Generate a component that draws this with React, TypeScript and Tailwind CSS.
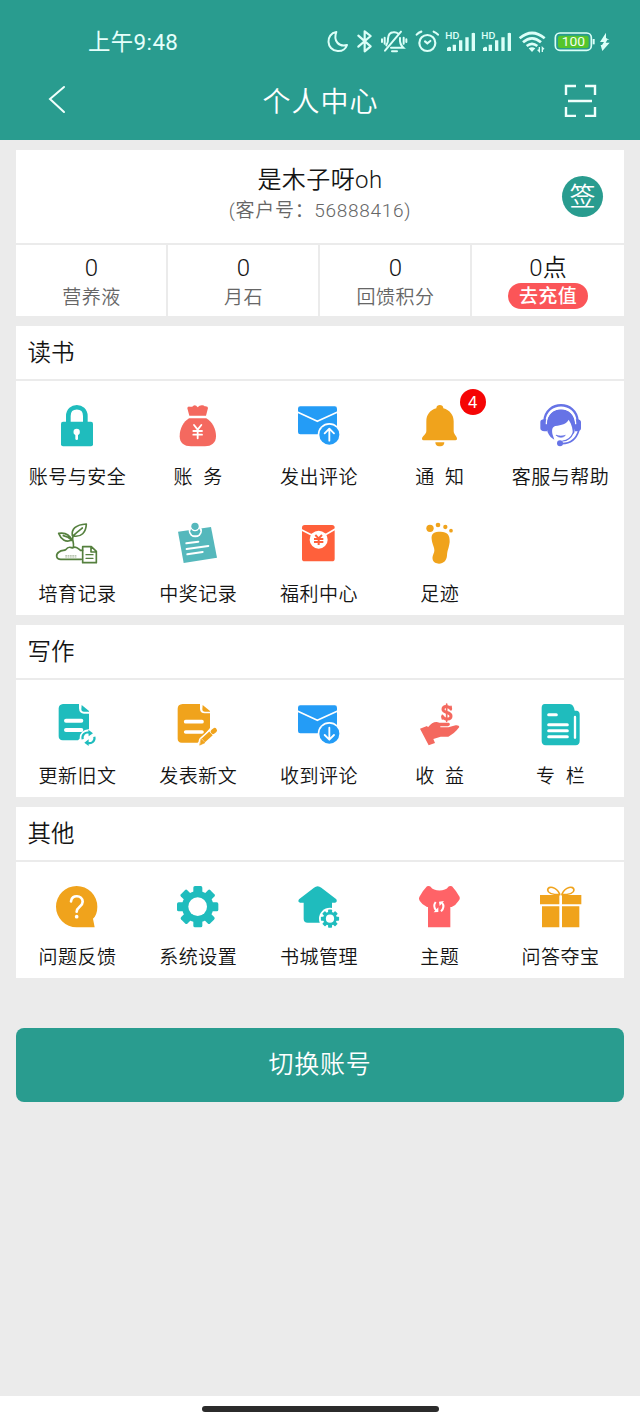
import type { ReactNode } from "react";

const TEAL = "#1fbcbd";
const ORANGE = "#f0a31c";
const CORAL = "#f4695f";
const BLUE = "#249cf6";

function Icon({ children }: { children: ReactNode }) {
  return (
    <svg viewBox="0 0 126 126" className="block size-[42px] shrink-0 overflow-visible" fill="none" strokeLinecap="round" strokeLinejoin="round">
      {children}
    </svg>
  );
}

const Lock = () => (
  <Icon>
    <path d="M37 56V33C37 -2 88 -2 88 33V56" stroke={TEAL} strokeWidth="14" />
    <rect x="15" y="50" width="96" height="74" rx="6" fill={TEAL} />
    <circle cx="62" cy="81" r="9.5" fill="#fff" />
    <path d="M62 84V101" stroke="#fff" strokeWidth="8" />
  </Icon>
);

const MoneyBag = () => (
  <Icon>
    <path d="M37 32L31 10Q31 4 38 5Q45 7 49 2Q56 -2 62 7Q67 1 74 1Q80 0 83 4Q93 3 93 9L87 32Z" fill={CORAL} />
    <path d="M36 40H88C106 50 117 72 117 94C117 114 103 124 84 124H42C21 124 8 114 8 94C8 70 20 50 36 40Z" fill={CORAL} />
    <path d="M51 60L62 74L73 60M62 74V100M49 78H75M49 89H75" stroke="#fff" strokeWidth="5.5" />
  </Icon>
);

function Mail({ down = false }: { down?: boolean }) {
  return (
    <Icon>
      <rect y="4" width="117" height="84" rx="7" fill={BLUE} />
      <path d="M-2 21L58 49L119 21" stroke="#fff" strokeWidth="5" />
      <circle cx="94" cy="89" r="35" fill="#fff" />
      <circle cx="94" cy="89" r="30" fill={BLUE} />
      <path d={down ? "M94 71V105M80 93L94 107L108 93" : "M94 107V73M80 85L94 71L108 85"} stroke="#fff" strokeWidth="5.5" />
    </Icon>
  );
}

const Bell = () => (
  <Icon>
    <path d="M52 10C52 -3 73 -3 73 10C93 16 104 30 104 49V78C104 88 114 94 114 101Q114 106 109 106H14Q9 106 9 101C9 94 22 88 22 78V49C22 30 32 16 52 10Z" fill={ORANGE} />
    <path d="M49 112H76C76 120 71 124 65 124H60C54 124 49 120 49 112Z" fill={ORANGE} />
  </Icon>
);

const Support = () => (
  <Icon>
    <path d="M13 48C18 -15 108 -15 113 48" stroke="#6673e6" strokeWidth="7" />
    <path d="M23 82C12 43 30 13 63 13C96 13 113 44 103 83L98 87C99 73 96 60 86 44C79 57 65 60 46 63C36 65 34 78 39 92L43 104C34 100 27 92 23 82Z" fill="#6673e6" />
    <path d="M13 43H21V79H13Q1 78 1 70V51Q1 43 13 43ZM105 43H112Q123 44 123 52V70Q123 78 112 79H105Z" fill="#6673e6" />
    <path d="M19 56C18 -4 108 -4 107 56" stroke="#fff" strokeWidth="4" />
    <path d="M116 77C109 101 90 115 66 116" stroke="#6673e6" strokeWidth="5" />
    <path d="M100 83C92 101 82 107 68 108" stroke="#6673e6" strokeWidth="3.5" />
    <circle cx="60" cy="115" r="9" fill="#6673e6" />
    <path d="M49 91C56 99 69 99 76 91C67 94 58 94 49 91Z" stroke="#6673e6" strokeWidth="2" fill="#6673e6" />
  </Icon>
);

const Sprout = () => (
  <Icon>
    <g stroke="#55803e" strokeWidth="5">
      <path d="M49 38C46 19 58 5 91 3C90 29 76 43 52 39M52 38C62 28 70 22 79 15" />
      <path d="M48 52C40 33 25 28 8 31C15 49 29 59 46 52M22 38C33 40 41 45 48 52M51 40C47 51 55 59 52 72" />
      <path d="M76 109H14C0 109 -2 94 9 87C18 80 25 84 29 80C38 68 43 73 50 75C59 66 67 77 73 82H80" />
      <path d="M80 71H106L121 85V119H80ZM105 72V87H120" />
      <path d="M90 95H111M90 106H111" strokeWidth="4" />
    </g>
    <path d="M29 98H60M29 102H60" stroke="#9caf91" strokeWidth="2.5" strokeDasharray="3 4" />
  </Icon>
);

const PinnedNote = () => (
  <Icon>
    <path d="M3 26L102 12L120 104L20 120Z" fill="#55b8bc" />
    <ellipse cx="55" cy="24" rx="20" ry="19" fill="#fff" />
    <ellipse cx="55" cy="25" rx="15" ry="12" fill="#55b8bc" />
    <circle cx="54" cy="12" r="13" fill="#fff" />
    <circle cx="54" cy="10" r="11" fill="#55b8bc" />
    <path d="M44 17C47 25 61 25 65 17" stroke="#fff" strokeWidth="3" />
    <path d="M28 61L64 56M29 78L94 69M31 94L77 87" stroke="#fff" strokeWidth="6" />
  </Icon>
);

const RedPacket = () => (
  <Icon>
    <rect x="12" y="6" width="98" height="109" rx="8" fill="#ff603b" />
    <path d="M10 20L47 39M112 18L77 38" stroke="#fff" strokeWidth="5" />
    <circle cx="62" cy="50" r="27" fill="#fff" />
    <path d="M52 36L62 46L72 36M62 46V66M48 48H76M48 57H76" stroke="#ff603b" strokeWidth="6" strokeLinecap="butt" />
  </Icon>
);

const Footprint = () => (
  <Icon>
    <ellipse cx="33" cy="16" rx="11" ry="11" fill={ORANGE} />
    <circle cx="57" cy="6" r="7" fill={ORANGE} />
    <circle cx="79" cy="12" r="6.5" fill={ORANGE} />
    <circle cx="96" cy="23" r="5.5" fill={ORANGE} />
    <path d="M38 48C36 31 46 26 65 26C85 26 93 36 92 57C90 75 85 81 84 97C83 113 74 122 60 122C41 122 37 107 43 94C52 77 39 67 38 48Z" fill={ORANGE} />
  </Icon>
);

function Doc({ color, edit = false }: { color: string; edit?: boolean }) {
  return (
    <Icon>
      {edit ? (
        <>
          <path d="M17 0H69V15Q70 28 83 28H99V72L62 116H14Q2 115 2 104V14Q2 1 17 0Z" fill={color} />
          <path d="M77 3L99 21V23H84Q76 23 76 15Z" fill={color} />
          <path d="M26 53H75M26 84H75" stroke="#fff" strokeWidth="11" />
          <path d="M78 111L112 81" stroke="#fff" strokeWidth="26" />
          <path d="M79 109L102 88" stroke={color} strokeWidth="15" strokeLinecap="butt" />
          <path d="M73 105L84 116L69 123Z" fill={color} stroke={color} strokeWidth="2" />
          <path d="M108 83L113 79" stroke={color} strokeWidth="14" />
        </>
      ) : (
        <>
          <path d="M21 0H69V13Q70 29 84 29H99V76L66 109H20Q8 108 8 97V13Q9 1 21 0Z" fill={color} />
          <path d="M77 3L99 21V23H84Q76 23 76 15Z" fill={color} />
          <path d="M30 50H76M30 78H76" stroke="#fff" strokeWidth="12" />
          <circle cx="97" cy="102" r="26" fill="#fff" />
          <path d="M80 106C77 93 87 83 99 86M115 98C118 110 108 120 96 117" stroke={color} strokeWidth="6.5" strokeLinecap="butt" />
          <path d="M97 77L111 88L98 97ZM98 106L85 116L98 126Z" fill={color} />
        </>
      )}
    </Icon>
  );
}

const Income = () => (
  <Icon>
    <path d="M3 74L24 66L27 70C38 56 49 51 61 56H89Q95 58 92 64L87 67H64V70H88L110 64Q121 63 121 69C111 84 98 92 88 98H65L43 105L48 117L29 124Z" fill={CORAL} />
    <path d="M95 14C89 5 72 5 72 16C72 29 96 22 96 36C96 48 77 48 71 38" stroke={CORAL} strokeWidth="9" />
    <path d="M83 0V52M96 7V17M70 34V45" stroke={CORAL} strokeWidth="5" />
  </Icon>
);

const Newspaper = () => (
  <Icon>
    <path d="M14 0H89Q101 1 104 20H111Q119 22 119 31V110Q119 123 107 124H17Q5 123 5 111V11Q5 1 14 0Z" fill={TEAL} />
    <path d="M26 32H49M26 62H82M26 80H82M26 98H82" stroke="#fff" strokeWidth="9" />
    <path d="M105 39V101" stroke="#fff" strokeWidth="7" />
  </Icon>
);

const Question = () => (
  <Icon>
    <path d="M62 0A62 62 0 0 1 124 62C124 79 119 91 111 98L116 124H62A62 62 0 0 1 62 0Z" fill={ORANGE} />
    <path d="M45 46C46 24 80 27 80 47C80 62 62 62 62 77" stroke="#fff" strokeWidth="8" />
    <circle cx="62" cy="92" r="5.5" fill="#fff" />
  </Icon>
);

function GearShape() {
  return (
    <>
      {[0, 45, 90, 135].map((angle) => (
        <rect key={angle} x="49" y="0" width="27" height="124" rx="5" fill={TEAL} transform={`rotate(${angle} 62 62)`} />
      ))}
      <circle cx="62" cy="62" r="47" fill={TEAL} />
      <circle cx="62" cy="62" r="28" fill="#fff" />
    </>
  );
}

const Gear = () => (
  <Icon>
    <GearShape />
  </Icon>
);

const HomeSettings = () => (
  <Icon>
    <path d="M3 40L48 5Q59 -4 70 5L115 40Q119 49 111 50H102V110H29Q17 110 17 99V50H6Q-2 48 3 40Z" fill={TEAL} />
    <circle cx="96" cy="98" r="33" fill="#fff" />
    <g transform="translate(68.7 70.7) scale(.44)">
      <GearShape />
    </g>
  </Icon>
);

const Shirt = () => (
  <Icon>
    <path d="M35 2C43 17 80 17 88 2Q92 -1 99 1Q112 15 122 33Q124 39 119 44Q111 57 98 63H94V124H27V63H24Q9 56 2 44Q-2 38 1 33Q12 13 24 1Q31 -1 35 2Z" fill="#ff6367" />
    <path d="M50 48C44 56 45 66 52 74M66 76C74 68 75 58 69 50" stroke="#fff" strokeWidth="6" strokeLinecap="butt" />
    <path d="M44 79L58 78V64ZM75 45L60 47L62 60Z" fill="#fff" />
  </Icon>
);

const Gift = () => (
  <Icon>
    <path d="M59 24C49 2 24 -2 23 12C24 25 44 26 59 26ZM66 24C76 2 101 -2 102 12C101 25 81 26 66 26Z" stroke={ORANGE} strokeWidth="5" />
    <path d="M0 27H58V55H0ZM66 27H124V55H66ZM6 61H58V124H6ZM66 61H118V124H66Z" fill={ORANGE} />
  </Icon>
);

type Item = { label: string; icon: ReactNode; badge?: number };

const sections: { title: string; items: Item[] }[] = [
  {
    title: "读书",
    items: [
      { label: "账号与安全", icon: <Lock /> },
      { label: "账  务", icon: <MoneyBag /> },
      { label: "发出评论", icon: <Mail /> },
      { label: "通  知", icon: <Bell />, badge: 4 },
      { label: "客服与帮助", icon: <Support /> },
      { label: "培育记录", icon: <Sprout /> },
      { label: "中奖记录", icon: <PinnedNote /> },
      { label: "福利中心", icon: <RedPacket /> },
      { label: "足迹", icon: <Footprint /> },
    ],
  },
  {
    title: "写作",
    items: [
      { label: "更新旧文", icon: <Doc color={TEAL} /> },
      { label: "发表新文", icon: <Doc color={ORANGE} edit /> },
      { label: "收到评论", icon: <Mail down /> },
      { label: "收  益", icon: <Income /> },
      { label: "专  栏", icon: <Newspaper /> },
    ],
  },
  {
    title: "其他",
    items: [
      { label: "问题反馈", icon: <Question /> },
      { label: "系统设置", icon: <Gear /> },
      { label: "书城管理", icon: <HomeSettings /> },
      { label: "主题", icon: <Shirt /> },
      { label: "问答夺宝", icon: <Gift /> },
    ],
  },
];

const stats = [
  { value: "0", label: "营养液" },
  { value: "0", label: "月石" },
  { value: "0", label: "回馈积分" },
];

function Signal() {
  return (
    <svg viewBox="0 0 108 150" className="h-[50px] w-9" fill="#dcfff8">
      <text x="10" y="56" fontSize="26" fontWeight="600" fontFamily="Inter, sans-serif" textLength="42" lengthAdjust="spacingAndGlyphs">HD</text>
      <path d="M15 84Q25 77 27 83V93H15ZM32 74H42V93H32ZM51 61H61V93H51ZM70 52H80V93H70ZM89 40Q94 36 99 40V93H89Z" />
    </svg>
  );
}

function StatusIcons() {
  return (
    <div className="flex h-[50px]">
      <svg viewBox="18 0 78 150" className="h-[50px] w-[26px]" fill="none" stroke="#dcfff8" strokeWidth="6" strokeLinejoin="round">
        <path d="M49 36C16 41 18 91 53 93C68 94 78 85 81 75C57 82 39 63 49 36Z" />
      </svg>
      <svg viewBox="96 0 72 150" className="h-[50px] w-6" fill="none" stroke="#dcfff8" strokeWidth="6.5" strokeLinejoin="round" strokeLinecap="round">
        <path d="M115 47L152 79L134 94V34L152 48L115 80" />
      </svg>
      <svg viewBox="168 0 108 150" className="h-[50px] w-9" fill="none" stroke="#dcfff8" strokeWidth="6" strokeLinecap="round">
        <path d="M243 35L195 92M199 76Q205 66 204 56Q205 38 220 37Q229 36 235 41M240 54Q238 72 250 83H213M216 94H231M194 53V71M186 58V66M251 53V71M259 58V66" />
      </svg>
      <svg viewBox="276 0 90 150" className="h-[50px] w-[30px]" fill="none" stroke="#dcfff8" strokeWidth="6.5" strokeLinecap="round">
        <circle cx="322" cy="69" r="24" />
        <path d="M290 44Q296 37 304 35M341 35Q349 38 354 44M315 64L322 70L331 63" />
      </svg>
      <Signal />
      <Signal />
      <svg viewBox="582 0 108 150" className="h-[50px] w-9" fill="none" stroke="#dcfff8" strokeWidth="8">
        <path d="M599 55Q636 23 674 55M609 67Q636 43 663 67M620 78Q636 65 652 78" />
        <path d="M626 85Q636 79 646 85L636 96Z" fill="#dcfff8" stroke="none" />
        <path d="M658 81V94L653 89M667 96V83L672 88" strokeWidth="4" />
      </svg>
      <svg viewBox="690 0 138 150" className="h-[50px] w-[46px]">
        <rect x="706" y="39" width="108" height="52" rx="14" fill="none" stroke="#dcfff8" strokeWidth="5" />
        <rect x="714" y="47" width="92" height="37" rx="7" fill="#55c52b" />
        <path d="M821 57V73" stroke="#dcfff8" strokeWidth="6" />
        <text x="760" y="79" fontSize="41" fontWeight="400" textAnchor="middle" fill="#f3ffef" fontFamily="Roboto, sans-serif" textLength="70" lengthAdjust="spacingAndGlyphs">100</text>
      </svg>
      <svg viewBox="828 0 48 150" className="h-[50px] w-4" fill="#dcfff8">
        <path d="M858 38L840 66H852L846 75H842L847 93L869 68H857L862 59H868L858 54Z" />
      </svg>
    </div>
  );
}

function Section({ title, items }: { title: string; items: Item[] }) {
  return (
    <section className="mb-[10px] bg-white pb-[7.5px]">
      <h2 className="flex h-[55px] items-center border-b-2 border-[#ebebeb] pt-[3px] pl-[11.5px] text-[23.5px] font-[350] text-[#141414]">{title}</h2>
      <div className="grid grid-cols-5 gap-y-[32.5px] pt-6 pr-[3px] pl-px">
        {items.map((item) => (
          <button key={item.label} type="button" className="flex h-[85px] flex-col items-center">
            <span className="relative block">
              {item.icon}
              {item.badge && (
                <span className="absolute -top-4 left-[41px] flex size-[26px] items-center justify-center rounded-full bg-[#f50505] font-['Inter'] text-[16px] font-normal text-white">
                  {item.badge}
                </span>
              )}
            </span>
            <span className="mt-[16.5px] text-[19px] leading-7 font-[350] tracking-[0.5px] whitespace-pre text-[#141414]">{item.label}</span>
          </button>
        ))}
      </div>
    </section>
  );
}

export default function App() {
  return (
    <div className="flex h-[1422px] w-[640px] flex-col bg-[#ebebeb] font-['Roboto','Noto_Sans_CJK_SC',sans-serif]">
      <header className="h-[140px] shrink-0 bg-[#299c8f] text-white">
        <div className="flex h-[70px] justify-between pt-5 pr-7 pl-[88px]">
          <time className="text-[22.4px] leading-[44px] font-normal tracking-[0.4px] text-[#e6fffb]">上午9:48</time>
          <StatusIcons />
        </div>
        <div className="flex h-[60px] items-center justify-between pr-[43px] pl-[48px]">
          <svg viewBox="0 0 34 34" className="size-[34px]" fill="none" stroke="#f0fffc" strokeWidth="2" strokeLinecap="round">
            <path d="M16 4L2 16L16 29" />
          </svg>
          <h1 className="-ml-[4px] pt-1.5 text-[28px] font-[350] tracking-[1px]">个人中心</h1>
          <svg viewBox="0 0 34 34" className="size-[34px]" fill="none" stroke="#f0fffc" strokeWidth="2.4">
            <path d="M3 12V3H13M22 3H32V12M32 24V33H22M13 33H3V24M5 18H29" />
          </svg>
        </div>
      </header>
      <main className="flex-1 px-4 pt-[10px]">
        <section className="mb-[10px] bg-white">
          <div className="relative flex h-[95px] flex-col items-center border-b-2 border-[#ebebeb] pt-[14px]">
            <div className="text-[24px] leading-8 font-[350] tracking-[0.4px] text-[#141414]">是木子呀oh</div>
            <div className="mt-px text-[19px] leading-[27px] font-[350] tracking-[0.7px] text-[#666]">(客户号：56888416)</div>
            <button type="button" className="absolute top-[26px] right-[21px] flex size-[41px] items-center justify-center rounded-full bg-[#299c8f] pt-0.5 text-[26px] font-[350] text-white">签</button>
          </div>
          <div className="grid h-[71px] grid-cols-4 divide-x-2 divide-[#ebebeb] text-center font-[350]">
            {stats.map((stat) => (
              <div key={stat.label} className="pt-2 pl-px">
                <div className="text-[24px] leading-[30px] text-[#141414]">{stat.value}</div>
                <div className="mt-px text-[19px] leading-[27px] tracking-[0.5px] text-[#666]">{stat.label}</div>
              </div>
            ))}
            <div className="flex flex-col items-center pt-2">
              <div className="text-[24px] leading-[30px] text-[#141414]">0点</div>
              <button type="button" className="h-[26px] w-20 rounded-full bg-[#fb5558] text-[19px] leading-[28px] font-medium tracking-[0.4px] text-white">去充值</button>
            </div>
          </div>
        </section>
        {sections.map((section) => (
          <Section key={section.title} {...section} />
        ))}
        <button type="button" className="mt-10 h-[74px] w-full rounded-lg bg-[#299c8f] text-[25px] font-[350] tracking-[0.8px] text-white">切换账号</button>
      </main>
      <footer className="flex h-[26px] shrink-0 justify-center bg-white pt-[10px]">
        <div className="h-[6px] w-[237px] rounded-full bg-[#2b2b2b]" />
      </footer>
    </div>
  );
}
